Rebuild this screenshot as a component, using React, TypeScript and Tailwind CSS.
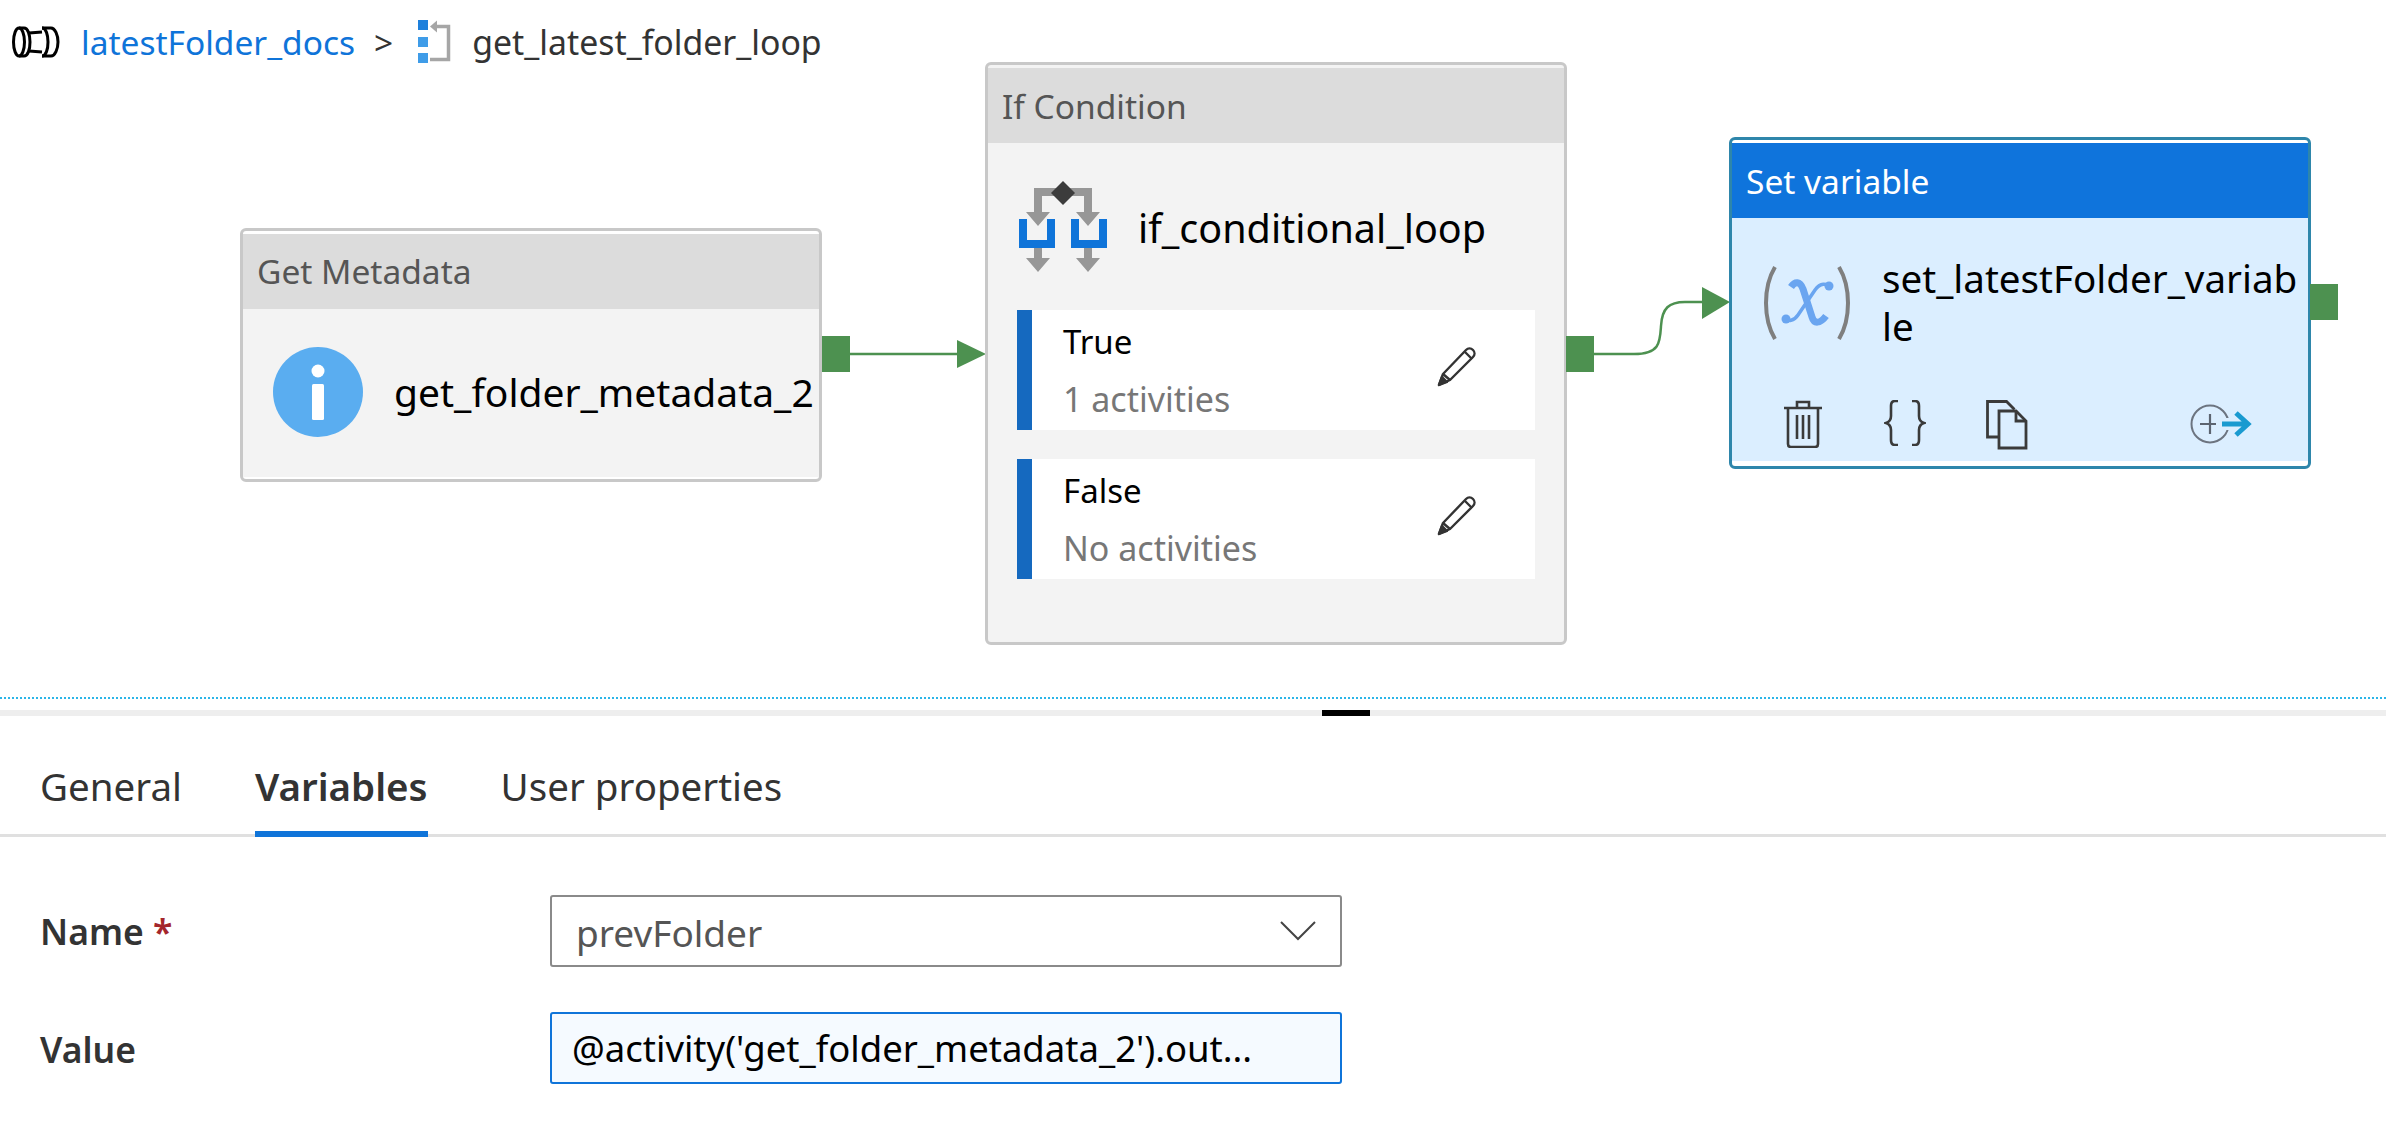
import { ReactNode } from 'react';

function PipelineIcon() {
  return (
    <svg width="48" height="32" viewBox="0 0 48 32" fill="none" stroke="#000" strokeWidth="3">
      <ellipse cx="7" cy="16" rx="5.5" ry="14" />
      <path d="M7 2h5c4 0 6 7 6 14s-2 14-6 14H7" />
      <path d="M17 7l13-1M17 25l13 1" />
      <path d="M30 2c4 0 6 7 6 14s-2 14-6 14" />
      <path d="M30 2h9c4 0 7 7 7 14s-3 14-7 14h-9" />
    </svg>
  );
}

function LoopIcon() {
  return (
    <svg width="34" height="44" viewBox="0 0 34 44">
      <rect x="0" y="0" width="10" height="10" fill="#1e80dc" />
      <rect x="0" y="17" width="10" height="10" fill="#3f9ce8" />
      <rect x="0" y="33" width="10" height="10" fill="#3f9ce8" />
      <path d="M18 6.5h12.5v33H12" fill="none" stroke="#a6a6a6" strokeWidth="3.5" />
      <path d="M12 6.5l7-6v12z" fill="#a6a6a6" />
    </svg>
  );
}

function IfIcon() {
  return (
    <svg width="88" height="92" viewBox="0 0 88 92">
      <path d="M19 36V11h50v25" fill="none" stroke="#979797" strokeWidth="8" />
      <path d="M7 31h24L19 45zM57 31h24L69 45z" fill="#979797" />
      <path d="M19 66v14M69 66v14" stroke="#979797" strokeWidth="8" />
      <path d="M7 77h24L19 91zM57 77h24L69 91z" fill="#979797" />
      <path d="M44 0l12 12-12 12-12-12z" fill="#3c3c3c" />
      <path d="M4 38v25h28V38M56 38v25h28V38" fill="none" stroke="#0f74d9" strokeWidth="8" />
    </svg>
  );
}

function VariableIcon() {
  return (
    <svg width="92" height="76" viewBox="0 0 92 76" fill="none">
      <path d="M14 2C2 22 2 54 14 74M78 2c12 20 12 52 0 72" stroke="#7f7f7f" strokeWidth="4" />
      <path d="M30 22c4-6 9-6 12 2l9 28c2 7 8 7 14-1" stroke="#6aa5f0" strokeWidth="7" />
      <path d="M69 24c-3-7-10-6-15 1L37 50c-4 6-10 7-13 3" stroke="#6aa5f0" strokeWidth="3.5" />
      <circle cx="68" cy="21" r="4.5" fill="#6aa5f0" />
      <circle cx="25" cy="54" r="4.5" fill="#6aa5f0" />
    </svg>
  );
}

function PencilIcon() {
  return (
    <svg width="40" height="40" viewBox="0 0 40 40" fill="none" stroke="#333" strokeWidth="2.4" strokeLinejoin="round">
      <path d="M2 38l4-11L29 3c2-2 5-2 7 0s2 5 0 7L13 33z" />
      <path d="M6 27l7 6M28 5l7 7" />
      <path d="M2 38l3-8 5 5z" fill="#333" />
    </svg>
  );
}

function TrashIcon() {
  return (
    <svg width="40" height="48" viewBox="0 0 40 48" fill="none" stroke="#3a3a3a" strokeWidth="2.6">
      <path d="M1 8h38M14 8V2h12v6M5 8v36c0 2 1 3 3 3h24c2 0 3-1 3-3V8" />
      <path d="M14 15v24M20 15v24M26 15v24" />
    </svg>
  );
}

function BracesIcon() {
  return (
    <svg width="42" height="46" viewBox="0 0 42 46" fill="none" stroke="#3a3a3a" strokeWidth="2.6">
      <path d="M14 1H11C8 1 7 3 7 6v10c0 4-2 6-5 7 3 1 5 3 5 7v10c0 3 1 5 4 5h3" />
      <path d="M28 1h3c3 0 4 2 4 5v10c0 4 2 6 5 7-3 1-5 3-5 7v10c0 3-1 5-4 5h-3" />
    </svg>
  );
}

function CopyIcon() {
  return (
    <svg width="42" height="50" viewBox="0 0 42 50" fill="none" stroke="#3a3a3a" strokeWidth="2.8">
      <path d="M13 37H1.5V1.5h19l8 8" />
      <path d="M13 11h17l10 10v27H13z" />
      <path d="M30 11v10h10" />
    </svg>
  );
}

function AddOutputIcon() {
  return (
    <svg width="62" height="40" viewBox="0 0 62 40" fill="none">
      <circle cx="20" cy="20" r="18.5" stroke="#6c7480" strokeWidth="2" />
      <path d="M10 20h20M20 10v20" stroke="#5c6470" strokeWidth="2.2" />
      <path d="M26 20h34" stroke="#dbeeff" strokeWidth="12" />
      <path d="M32 20h26M46 9l12 11-12 11" stroke="#1a9ad0" strokeWidth="5" />
    </svg>
  );
}

function BranchRow({ label, sub }: { label: string; sub: string }) {
  return (
    <div className="flex h-[120px] items-center bg-white border-l-[15px] border-[#1569bf]">
      <div className="ml-[31px] flex-1">
        <div className="text-[33px] leading-[40px] text-black">{label}</div>
        <div className="mt-[17px] text-[34px] leading-[40px] text-[#777]">{sub}</div>
      </div>
      <div className="mr-[58px] mt-[-6px]">
        <PencilIcon />
      </div>
    </div>
  );
}

function Node({
  title,
  className,
  headerClass,
  children,
}: {
  title: string;
  className: string;
  headerClass: string;
  children: ReactNode;
}) {
  return (
    <div className={`absolute rounded-[6px] border-[3px] pt-[3px] ${className}`}>
      <div className={`flex h-[75px] items-center pl-[14px] text-[33.5px] ${headerClass}`}>{title}</div>
      {children}
    </div>
  );
}

function Port({ className }: { className: string }) {
  return <div className={`absolute w-[28px] h-[36px] bg-[#4d9150] ${className}`} />;
}

export default function App() {
  return (
    <div className="w-[2386px] h-[1124px] overflow-hidden bg-white font-['Noto_Sans',sans-serif] text-[#333]">
      {/* pipeline canvas */}
      <div className="relative h-[699px] border-b-2 border-dotted border-[#2bb5e8]">
        <div className="flex items-center h-[84px] pl-[12px]">
          <PipelineIcon />
          <span className="ml-[21px] text-[33.5px] text-[#0f74d9]">latestFolder_docs</span>
          <span className="ml-[19px] text-[33.5px]">&gt;</span>
          <span className="ml-[25px]">
            <LoopIcon />
          </span>
          <span className="ml-[20px] text-[33.8px]">get_latest_folder_loop</span>
        </div>

        <svg className="absolute left-0 top-0" width="2386" height="699" fill="none">
          <path d="M849 354H960" stroke="#4d9150" strokeWidth="2.5" />
          <path d="M957 340l29 14-29 14z" fill="#4d9150" />
          <path d="M1594 354h40c26 0 26-12 27-28 1-18 8-24 24-24h18" stroke="#4d9150" strokeWidth="2.5" />
          <path d="M1702 287l28 15-28 17z" fill="#4d9150" />
        </svg>

        <Node
          title="Get Metadata"
          className="left-[240px] top-[228px] w-[582px] h-[254px] border-[#c8c8c8] bg-white"
          headerClass="bg-[#dcdcdc] text-[#555]"
        >
          <div className="flex h-[168px] items-center bg-[#f3f3f3] pl-[30px] pb-[2px]">
            <svg width="90" height="90" viewBox="0 0 90 90">
              <circle cx="45" cy="45" r="45" fill="#5aadf0" />
              <circle cx="45" cy="24" r="6.5" fill="#fff" />
              <rect x="39" y="37" width="12" height="36" rx="1.5" fill="#fff" />
            </svg>
            <span className="ml-[31px] whitespace-nowrap text-[39px] text-black">get_folder_metadata_2</span>
          </div>
        </Node>
        <Port className="left-[822px] top-[336px]" />

        <Node
          title="If Condition"
          className="left-[985px] top-[62px] w-[582px] h-[583px] border-[#c8c8c8] bg-[#f3f3f3]"
          headerClass="bg-[#dcdcdc] pt-[2px] text-[#555]"
        >
          <div className="px-[29px] pt-[38px]">
            <div className="flex items-center">
              <span className="ml-[2px]">
                <IfIcon />
              </span>
              <span className="ml-[31px] mt-[4px] whitespace-nowrap text-[39.5px] text-black">if_conditional_loop</span>
            </div>
            <div className="mt-[37px] flex flex-col gap-[29px]">
              <BranchRow label="True" sub="1 activities" />
              <BranchRow label="False" sub="No activities" />
            </div>
          </div>
        </Node>
        <Port className="left-[1566px] top-[336px]" />

        <Node
          title="Set variable"
          className="left-[1729px] top-[137px] w-[582px] h-[332px] border-[#2e86ab] bg-white"
          headerClass="bg-[#0f74dc] pt-[2px] text-white"
        >
          <div className="h-[243px] bg-[#dbeeff]">
            <div className="flex items-start pl-[29px] pt-[36px]">
              <span className="mt-[11px]">
                <VariableIcon />
              </span>
              <span className="ml-[29px] w-[420px] break-all text-[38.6px] leading-[48px] text-black">
                set_latestFolder_variable
              </span>
            </div>
            <div className="relative">
              <span className="absolute left-[51px] top-[50px]"><TrashIcon /></span>
              <span className="absolute left-[152px] top-[50px]"><BracesIcon /></span>
              <span className="absolute left-[254px] top-[50px]"><CopyIcon /></span>
              <span className="absolute left-[458px] top-[54px]"><AddOutputIcon /></span>
            </div>
          </div>
        </Node>
        <Port className="left-[2310px] top-[284px]" />
      </div>

      {/* splitter */}
      <div className="mt-[11px] flex h-[6px] justify-start bg-[#eeeeee] pl-[1322px]">
        <div className="h-full w-[48px] bg-black" />
      </div>

      {/* properties panel */}
      <div className="flex h-[121px] items-end gap-[73px] border-b-[3px] border-[#e0e0e0] pl-[40px]">
        <div className="pb-[24px] text-[38.5px] leading-[48px]">General</div>
        <div className="mb-[-3px] border-b-[6px] border-[#0f74d9] pb-[21px] text-[38.5px] font-semibold leading-[48px]">
          Variables
        </div>
        <div className="pb-[24px] text-[38.5px] leading-[48px]">User properties</div>
      </div>

      <div className="mt-[58px] grid grid-cols-[510px_792px] items-center gap-y-[45px] pl-[40px]">
        <div className="pt-[2px] text-[35.5px] font-semibold">
          Name <span className="text-[#a4262c]">*</span>
        </div>
        <div className="flex h-[72px] items-center justify-between rounded-[3px] border-2 border-[#8a8a8a] pl-[24px] pr-[24px]">
          <span className="pt-[3px] text-[37px] text-[#555]">prevFolder</span>
          <svg width="36" height="20" viewBox="0 0 36 20" fill="none" stroke="#444" strokeWidth="2">
            <path d="M1 1l17 17L35 1" />
          </svg>
        </div>
        <div className="pt-[3px] text-[35.5px] font-semibold">Value</div>
        <div className="flex h-[72px] items-center rounded-[3px] border-2 border-[#0f74d9] bg-[#f5faff] pl-[20px]">
          <span className="whitespace-nowrap text-[36.5px] text-black">@activity('get_folder_metadata_2').out...</span>
        </div>
      </div>
    </div>
  );
}
